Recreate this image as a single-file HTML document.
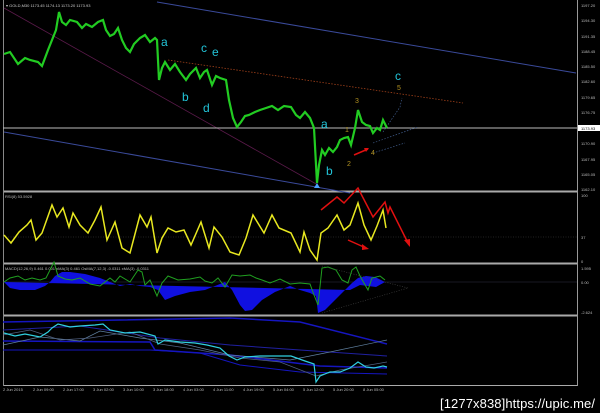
<!DOCTYPE html>
<html><head><meta charset="utf-8"><style>
html,body{margin:0;padding:0;background:#000;width:600px;height:413px;overflow:hidden}
svg{display:block}
text{font-family:"Liberation Sans",sans-serif}
</style></head><body>
<svg width="600" height="413" viewBox="0 0 600 413" xmlns="http://www.w3.org/2000/svg">
<rect width="600" height="413" fill="#000"/>
<line x1="577.5" y1="0" x2="577.5" y2="386" stroke="#999" stroke-width="1"/>
<line x1="3" y1="191.5" x2="577" y2="191.5" stroke="#aaa" stroke-width="2"/>
<line x1="3" y1="263.5" x2="577" y2="263.5" stroke="#aaa" stroke-width="2"/>
<line x1="3" y1="315.5" x2="577" y2="315.5" stroke="#aaa" stroke-width="2"/>
<line x1="3" y1="385.5" x2="577" y2="385.5" stroke="#aaa" stroke-width="1"/>
<line x1="3.5" y1="0" x2="3.5" y2="386" stroke="#888" stroke-width="1"/>
<text x="6" y="7" font-size="4" fill="#ccc">▾ GOLD,M30 1173.45 1174.13 1173.20 1173.93</text>
<line x1="157" y1="2" x2="576" y2="73" stroke="#3a4a9a" stroke-width="1"/>
<line x1="4" y1="132" x2="350" y2="193" stroke="#3a4a9a" stroke-width="1"/>
<line x1="4" y1="8" x2="318" y2="185" stroke="#5a1a4a" stroke-width="0.8"/>
<line x1="168" y1="60" x2="463" y2="103" stroke="#a0401a" stroke-width="0.8" stroke-dasharray="1.5,1.5"/>
<line x1="3" y1="128" x2="577" y2="128" stroke="#bbb" stroke-width="1"/>
<polyline points="383,132 400,107 402,98" fill="none" stroke="#4a6aa0" stroke-width="0.6" stroke-dasharray="1.5,1.5"/>
<polyline points="373,143 418,127" fill="none" stroke="#4a6aa0" stroke-width="0.6" stroke-dasharray="1.5,1.5"/>
<polyline points="373,153 405,143" fill="none" stroke="#4a6aa0" stroke-width="0.6" stroke-dasharray="1.5,1.5"/>
<polyline fill="none" stroke="#22cc22" stroke-width="2.2" points="4,54 10,52 18,64 25,58 30,60 38,62 42,66 48,50 52,40 56,30 59,12 62,22 66,25 70,20 77,22 82,28 86,24 92,27 98,22 103,20 106,30 110,36 114,34 118,28 122,40 126,48 130,52 134,44 140,38 145,35 150,42 155,38 157,40 159,80 162,68 165,62 170,70 175,64 180,72 186,80 190,74 196,68 200,78 204,72 207,70 212,85 216,76 220,78 226,80 229,100 233,118 237,127 241,122 245,116 249,115 255,112 260,110 266,108 272,106 278,110 284,106 291,107 296,115 300,118 305,112 310,118 314,128 317,183 319,165 322,150 325,155 329,148 333,152 337,147 340,140 344,138 348,137 351,145 355,128 358,110 362,122 366,125 370,126 373,133 377,128 380,130 383,120 385,124 387,128"/>
<polygon points="314,188 317,183 320,188" fill="#4aa0ff"/>
<g font-size="12" fill="#22c4d8">
<text x="161" y="46">a</text><text x="201" y="52">c</text><text x="212" y="56">e</text>
<text x="182" y="101">b</text><text x="203" y="112">d</text>
<text x="321" y="128">a</text><text x="326" y="175">b</text><text x="395" y="80">c</text>
</g>
<g font-size="7" fill="#b09020">
<text x="345" y="132">1</text><text x="347" y="166">2</text><text x="355" y="103">3</text><text x="371" y="155">4</text><text x="397" y="90">5</text>
</g>
<line x1="354" y1="155" x2="368" y2="149" stroke="#e01010" stroke-width="1.5"/>
<polygon points="369,148 364,148 366,152" fill="#e01010"/>
<g font-size="4" fill="#bbb">
<text x="581" y="7">1197.20</text><text x="581" y="22">1194.30</text><text x="581" y="38">1191.35</text><text x="581" y="53">1188.45</text><text x="581" y="68">1185.50</text><text x="581" y="83">1182.60</text><text x="581" y="99">1179.65</text><text x="581" y="114">1176.75</text><text x="581" y="145">1170.90</text><text x="581" y="161">1167.95</text><text x="581" y="176">1165.05</text><text x="581" y="191">1162.10</text>
<text x="581" y="197">100</text><text x="581" y="239">37</text><text x="581" y="263">0</text>
<text x="581" y="270">1.595</text><text x="581" y="284">0.00</text><text x="581" y="314">-2.624</text>
</g>
<rect x="578" y="125" width="22" height="6" fill="#fff"/>
<text x="581" y="130" font-size="4" fill="#000">1173.93</text>
<text x="5" y="198" font-size="4" fill="#bbb">RSI(8) 53.5928</text>
<line x1="3" y1="237" x2="577" y2="237" stroke="#444" stroke-width="0.6" stroke-dasharray="1,1.5"/>
<polyline fill="none" stroke="#e8e820" stroke-width="1.5" points="4,235 11,243 19,232 27,225 31,220 36,240 42,233 52,205 57,217 63,208 69,227 73,213 80,225 88,233 95,220 101,207 107,240 115,222 122,248 130,253 140,215 147,227 151,217 157,253 162,238 168,228 176,232 184,230 191,245 201,222 209,248 214,227 222,237 230,252 239,255 246,238 253,215 264,233 272,215 279,228 291,233 300,252 304,232 310,250 317,260 321,233 328,228 337,215 344,230 350,225 358,203 364,225 371,240 377,226 383,210 386,228"/>
<polyline fill="none" stroke="#e01010" stroke-width="1.5" points="321,210 337,197 344,203 358,188 373,217 385,202 388,213 390,207 409,245"/>
<polygon points="410,247 404,240 410,239" fill="#e01010"/>
<line x1="348" y1="240" x2="366" y2="248" stroke="#e01010" stroke-width="1.5"/>
<polygon points="369,249 362,244 362,250" fill="#e01010"/>
<text x="5" y="270" font-size="4" fill="#bbb">MACD(12,26,9) 0.461 0.001 xMA(3) 0.461 OsMA(7,12,3) -0.0311 xMA(3) -0.0311</text>
<line x1="3" y1="282" x2="577" y2="282" stroke="#334" stroke-width="0.6"/>
<path fill="#1010e0" d="M4,282 L10,288 L20,290 L35,290 L45,286 L50,282 L55,276 L62,272 L70,272 L85,274 L100,278 L110,282 L120,286 L130,284 L140,286 L150,287 L158,290 L165,300 L175,296 L190,292 L205,290 L215,286 L225,282 L232,290 L240,305 L245,311 L252,310 L262,300 L275,292 L290,286 L300,290 L310,293 L316,296 L318,313 L325,310 L335,300 L345,290 L352,283 L358,278 L366,276 L375,277 L385,282 L376,287 L360,285 L350,290 Z"/>
<polyline fill="none" stroke="#20a020" stroke-width="1" points="4,282 10,278 18,276 25,280 32,278 40,280 46,278 50,270 54,262 58,276 65,279 72,280 80,278 90,284 100,286 110,278 115,282 120,276 130,282 138,270 142,272 145,285 150,280 157,296 162,283 168,276 178,280 190,279 200,277 205,281 212,283 218,278 225,287 232,275 240,276 250,275 256,278 262,280 270,283 280,279 290,284 300,283 310,284 314,295 318,305 322,268 328,267 336,270 342,280 348,283 352,270 356,267 360,276 368,290 372,278 380,276 385,280"/>
<polyline fill="none" stroke="#444" stroke-width="0.6" stroke-dasharray="1,1.5" points="322,266 408,288 322,313"/>
<polyline fill="none" stroke="#1515c0" stroke-width="1.5" points="3,322 120,320 230,318 300,322 387,344"/>
<polyline fill="none" stroke="#1515c0" stroke-width="1.5" points="3,341 150,342 155,350 230,355 320,366 387,368"/>
<polyline fill="none" stroke="#1515c0" stroke-width="1" points="3,350 150,350 200,353 240,365 300,372 387,374"/>
<polyline fill="none" stroke="#2020a0" stroke-width="1" points="3,330 80,326 160,338 230,345 300,350 387,356"/>
<polyline fill="none" stroke="#6080a0" stroke-width="0.7" points="3,345 40,337 80,341 100,331 140,338 180,343 230,355 290,360 330,352 387,340"/>
<polyline fill="none" stroke="#506080" stroke-width="0.7" points="3,335 30,330 60,340 90,338 130,332 160,344 200,350 240,358 280,362 316,376 340,370 387,362"/>
<polyline fill="none" stroke="#30d0e0" stroke-width="1.2" points="4,333 15,336 25,334 40,337 48,332 52,328 58,324 70,327 80,326 95,325 103,324 110,330 125,333 140,332 155,336 158,344 165,340 180,342 195,343 207,345 220,348 229,356 237,360 245,357 260,356 280,356 291,356 305,361 314,364 316,382 320,376 330,372 340,372 350,368 358,362 366,367 374,368 383,366 387,367"/>
<g font-size="4" fill="#bbb">
<text x="3" y="391">2 Jun 2015</text><text x="33" y="391">2 Jun 09:00</text><text x="63" y="391">2 Jun 17:00</text><text x="93" y="391">3 Jun 02:00</text><text x="123" y="391">3 Jun 10:00</text><text x="153" y="391">3 Jun 18:00</text><text x="183" y="391">4 Jun 03:00</text><text x="213" y="391">4 Jun 11:00</text><text x="243" y="391">4 Jun 19:00</text><text x="273" y="391">5 Jun 04:00</text><text x="303" y="391">5 Jun 12:00</text><text x="333" y="391">5 Jun 20:00</text><text x="363" y="391">8 Jun 05:00</text>
</g>
<text x="440" y="408" font-size="13" fill="#fff" font-family="Liberation Mono, monospace" textLength="155">[1277x838]https://upic.me/</text>
</svg>
</body></html>
